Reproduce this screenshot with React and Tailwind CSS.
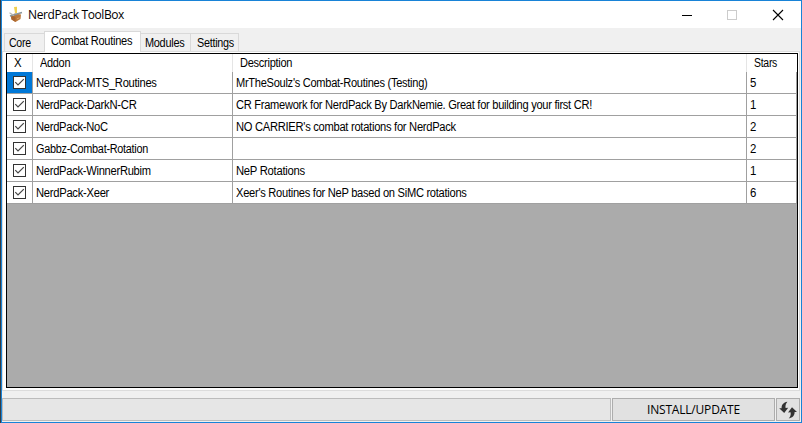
import React from 'react';

const rows = [
  { name: 'NerdPack-MTS_Routines', nt: 'scale-x-[0.93]', desc: "MrTheSoulz's Combat-Routines (Testing)", dt: 'scale-x-[0.922]', stars: 5, active: true },
  { name: 'NerdPack-DarkN-CR', nt: 'scale-x-[0.94]', desc: 'CR Framework for NerdPack By DarkNemie. Great for building your first CR!', dt: 'scale-x-[0.925]', stars: 1 },
  { name: 'NerdPack-NoC', nt: 'scale-x-[0.93]', desc: "NO CARRIER's combat rotations for NerdPack", dt: 'scale-x-[0.93]', stars: 2 },
  { name: 'Gabbz-Combat-Rotation', nt: 'scale-x-[0.905]', desc: '', dt: '', stars: 2 },
  { name: 'NerdPack-WinnerRubim', nt: 'scale-x-[0.93]', desc: 'NeP Rotations', dt: 'scale-x-[0.94]', stars: 1 },
  { name: 'NerdPack-Xeer', nt: 'scale-x-[0.935]', desc: "Xeer's Routines for NeP based on SiMC rotations", dt: 'scale-x-[0.927]', stars: 6 },
];

const grid = 'grid grid-cols-[26px_200px_514px_50px]';

function Label({ fit = 'scale-x-[0.91]', children }) {
  return <span className={`inline-block origin-left tracking-[-0.3px] ${fit}`}>{children}</span>;
}

function Check() {
  return (
    <svg width="13" height="13" viewBox="0 0 13 13" className="block">
      <rect x="0.5" y="0.5" width="12" height="12" fill="#fff" stroke="#333" />
      <path d="M2.3 6.2L5 9L10.8 3.2" fill="none" stroke="#444" strokeWidth="1.2" />
    </svg>
  );
}

function AppIcon() {
  return (
    <svg width="14" height="17" viewBox="0 0 14 17" className="block">
      <path d="M5 1L8 0.7L8 7H6z" fill="#efd04f" />
      <path d="M1.5 9L6 7.5L12 8.5L11.5 13L6.5 16L2.5 13.5z" fill="#bd793a" />
      <path d="M2 9.5L6.5 11L6.5 16L2.5 13.5z" fill="#a8652f" />
      <path d="M1 10L13 6.5" stroke="#89969b" strokeWidth="1.6" />
      <path d="M0.5 6.8L5 9.5" stroke="#b4b8b2" strokeWidth="1.3" />
      <path d="M8 12.8L10.5 11.8" stroke="#d9a466" strokeWidth="1" />
    </svg>
  );
}

function Refresh() {
  return (
    <svg width="18" height="18" viewBox="0 0 18 18" className="block shrink-0" fill="#333">
      <path d="M8.4 0.8C4.4 1.4 2.5 3.8 2.6 7.2L0.2 7.2L5.2 12L9.2 6.8L6.6 6.9C6.2 4.6 6.7 2.7 8.4 0.8z" />
      <path d="M9.8 17.4C13.8 16.8 15.7 14.4 15.6 11L18 11L13 6.2L9 11.4L11.6 11.3C12 13.6 11.5 15.5 9.8 17.4z" />
    </svg>
  );
}

export default function App() {
  return (
    <div className="flex h-[423px] w-[802px] overflow-hidden bg-[#353d45] pl-px font-['Liberation_Sans',Arial,sans-serif] text-[12px] leading-[14px] whitespace-nowrap text-black">
      <div className="flex w-[801px] flex-col border border-[#1883d7] bg-[#f0f0f0]">
        <header className="flex h-[27px] shrink-0 items-center bg-white">
          <div className="ml-[7px]"><AppIcon /></div>
          <h1 className="ml-[5px] font-['Open_Sans','Noto_Sans',sans-serif] text-[12px] leading-[16px] tracking-[-0.4px]">NerdPack ToolBox</h1>
          <svg width="106" height="12" viewBox="0 0 106 12" className="mr-[15px] ml-auto block" fill="none">
            <path d="M2 6.5H12" stroke="#000" />
            <rect x="47.5" y="1.5" width="9" height="9" stroke="#ccc" />
            <path d="M93 1L103 11M103 1L93 11" stroke="#000" strokeWidth="1.1" />
          </svg>
        </header>

        <nav className="flex h-[23px] shrink-0 items-end pl-[2px]">
          <div className="h-[18px] w-[40px] border-t border-l border-[#d9d9d9] pt-[2px] pl-[4px]"><Label fit="scale-x-[0.88]">Core</Label></div>
          <div className="z-10 -mb-px h-[21px] w-[97px] border-x border-t border-[#d9d9d9] bg-white pt-[2px] pl-[6px]"><Label fit="scale-x-[0.92]">Combat Routines</Label></div>
          <div className="h-[18px] w-[50px] border-t border-r border-[#d9d9d9] pt-[2px] pl-[4px]"><Label>Modules</Label></div>
          <div className="h-[18px] w-[48px] border-t border-r border-[#d9d9d9] pt-[2px] pl-[6px]"><Label fit="scale-x-[0.9]">Settings</Label></div>
        </nav>

        <main className="h-[340px] w-[798px] shrink-0 border border-[#dcdcdc] bg-white pt-[1px] pl-[3px]">
          <div className="h-[335px] w-[792px] border border-black bg-[#ababab]">
            <div className={`${grid} h-[18px] bg-white`}>
              <div className="border-r border-[#e5e5e5] pt-[2px] pl-[7px]"><Label fit="scale-x-[0.95]">X</Label></div>
              <div className="border-r border-[#e5e5e5] pt-[2px] pl-[7px]"><Label>Addon</Label></div>
              <div className="border-r border-[#e5e5e5] pt-[2px] pl-[7px]"><Label fit="scale-x-[0.92]">Description</Label></div>
              <div className="pt-[2px] pl-[7px]"><Label fit="scale-x-[0.87]">Stars</Label></div>
            </div>
            {rows.map((r) => (
              <div key={r.name} className={`${grid} h-[22px] bg-white *:border-r *:border-b *:border-[#a0a0a0]`}>
                <div className={`pt-[4px] pl-[6px] ${r.active ? 'bg-[#0078d7]' : ''}`}><Check /></div>
                <div className="pt-[4px] pl-[3px]"><Label fit={r.nt}>{r.name}</Label></div>
                <div className="pt-[4px] pl-[3px]"><Label fit={r.dt}>{r.desc}</Label></div>
                <div className="pt-[4px] pl-[3px]"><Label fit="scale-x-[0.95]">{r.stars}</Label></div>
              </div>
            ))}
          </div>
        </main>

        <footer className="mt-[7px] flex h-[23px] shrink-0">
          <div className="w-[609px] border border-[#bcbcbc] bg-[#e6e6e6]" />
          <button className="ml-px w-[163px] border border-[#adadad] bg-[#e1e1e1] font-['Open_Sans','Noto_Sans',sans-serif] text-[12px] leading-[16px] tracking-[-0.2px]">INSTALL/UPDATE</button>
          <button className="ml-px flex w-[24px] items-center justify-center border border-[#adadad] bg-[#e1e1e1]"><Refresh /></button>
        </footer>
      </div>
    </div>
  );
}
